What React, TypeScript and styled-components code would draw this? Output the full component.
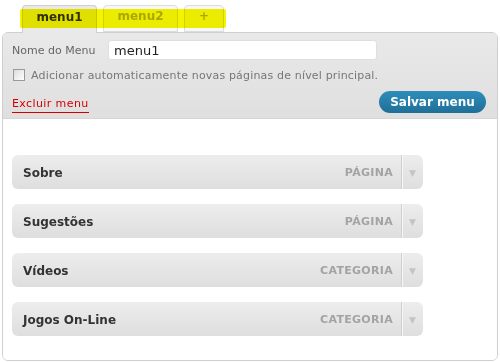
import styled, { createGlobalStyle } from "styled-components"

const GlobalStyle = createGlobalStyle`
  body {
    margin: 0;
    background: #ffffff;
    font-family: "DejaVu Sans", Verdana, sans-serif;
  }
`

const Page = styled.div`
  width: 500px;
  height: 362px;
  padding: 5px 0 0 2px;
  box-sizing: border-box;
`

const TabBar = styled.div`
  position: relative;
  display: flex;
  gap: 6px;
  padding-left: 20px;
  height: 27px;
  align-items: flex-end;
`

const Tab = styled.div<{ $active?: boolean; $w: number }>`
  width: ${(p) => p.$w}px;
  height: ${(p) => (p.$active ? 28 : 27)}px;
  box-sizing: border-box;
  margin-bottom: ${(p) => (p.$active ? -1 : 0)}px;
  border: 1px solid ${(p) => (p.$active ? "#cfcfcf" : "#dcdcdc")};
  border-bottom: ${(p) => (p.$active ? "none" : "1px solid #dcdcdc")};
  border-radius: 4px 4px 0 0;
  background: ${(p) => (p.$active ? "#e9e9e9" : "#f7f7f7")};
  display: flex;
  align-items: center;
  justify-content: center;
  padding-bottom: ${(p) => (p.$active ? 6 : 5)}px;
  font-size: 12px;
  font-weight: bold;
  color: ${(p) => (p.$active ? "#333" : "#b0b0b0")};
  z-index: 1;
`

const Highlight = styled.div`
  position: absolute;
  left: 18px;
  top: 4px;
  width: 206px;
  height: 19px;
  background: #f4f400;
  mix-blend-mode: multiply;
  z-index: 2;
  border-radius: 2px;
`

const Panel = styled.div`
  width: 496px;
  height: 329px;
  box-sizing: border-box;
  border: 1px solid #cfcfcf;
  border-radius: 6px;
  overflow: hidden;
  display: flex;
  flex-direction: column;
`

const Header = styled.div`
  height: 86px;
  box-sizing: border-box;
  background: linear-gradient(#e9e9e9, #dfdfdf);
  border-bottom: 1px solid #d6d6d6;
  padding: 7px 11px 0 9px;
  display: flex;
  flex-direction: column;
`

const NameRow = styled.div`
  display: flex;
  align-items: center;
  height: 20px;
`

const Label = styled.span`
  font-size: 11px;
  color: #666;
  width: 96px;
`

const NameInput = styled.input`
  width: 269px;
  height: 20px;
  box-sizing: border-box;
  border: 1px solid #dfdfdf;
  border-radius: 3px;
  background: #fff;
  padding: 0 5px;
  font-family: "DejaVu Sans", Verdana, sans-serif;
  font-size: 13px;
  color: #222;
  outline: none;
`

const CheckRow = styled.label`
  display: flex;
  align-items: center;
  margin-top: 9px;
  height: 12px;
  font-size: 11px;
  letter-spacing: 0.17px;
  color: #777;
`

const Box = styled.span`
  width: 10px;
  height: 10px;
  margin: 0 6px 0 1px;
  border: 1px solid #999;
  background: linear-gradient(135deg, #dcdcdc, #ffffff);
`

const ActionRow = styled.div`
  display: flex;
  justify-content: space-between;
  align-items: center;
  margin-top: 9px;
`

const DeleteLink = styled.a`
  font-size: 11px;
  letter-spacing: 0.4px;
  color: #d40000;
  text-decoration: none;
  border-bottom: 1px solid #d40000;
  padding-bottom: 2px;
  margin-top: 7px;
`

const SaveButton = styled.button`
  width: 107px;
  height: 22px;
  border: none;
  border-radius: 11px;
  background: linear-gradient(#2e8dbb, #1f6f98);
  color: #fff;
  font-family: "DejaVu Sans", Verdana, sans-serif;
  font-size: 12px;
  font-weight: bold;
  padding: 0;
`

const List = styled.div`
  flex: 1;
  background: #fff;
  padding: 36px 0 0 9px;
  display: flex;
  flex-direction: column;
  gap: 15px;
`

const Item = styled.div`
  width: 411px;
  height: 34px;
  box-sizing: border-box;
  border-radius: 6px;
  background: linear-gradient(#ededed, #dedede);
  display: flex;
  align-items: center;
  padding-left: 11px;
`

const ItemTitle = styled.span`
  flex: 1;
  padding-top: 2px;
  font-size: 12px;
  font-weight: bold;
  color: #333;
`

const ItemType = styled.span`
  padding-top: 1px;
  font-size: 11px;
  font-weight: bold;
  color: #a3a3a3;
  letter-spacing: 0.3px;
  margin-right: 8px;
`

const Toggle = styled.span`
  width: 22px;
  height: 100%;
  border-left: 1px solid #d0d0d0;
  box-shadow: inset 1px 0 0 #f6f6f6;
  display: flex;
  align-items: center;
  justify-content: center;
  padding-top: 2px;
  box-sizing: border-box;
  color: #c4c4c4;
  font-size: 9px;
`

const items = [
  { title: "Sobre", type: "PÁGINA" },
  { title: "Sugestões", type: "PÁGINA" },
  { title: "Vídeos", type: "CATEGORIA" },
  { title: "Jogos On-Line", type: "CATEGORIA" },
]

export default function App() {
  return (
    <Page>
      <GlobalStyle />
      <TabBar>
        <Tab $active $w={75}>menu1</Tab>
        <Tab $w={75}>menu2</Tab>
        <Tab $w={40}>+</Tab>
        <Highlight />
      </TabBar>
      <Panel>
        <Header>
          <NameRow>
            <Label>Nome do Menu</Label>
            <NameInput defaultValue="menu1" />
          </NameRow>
          <CheckRow>
            <Box />
            Adicionar automaticamente novas páginas de nível principal.
          </CheckRow>
          <ActionRow>
            <DeleteLink>Excluir menu</DeleteLink>
            <SaveButton>Salvar menu</SaveButton>
          </ActionRow>
        </Header>
        <List>
          {items.map((item) => (
            <Item key={item.title}>
              <ItemTitle>{item.title}</ItemTitle>
              <ItemType>{item.type}</ItemType>
              <Toggle>▼</Toggle>
            </Item>
          ))}
        </List>
      </Panel>
    </Page>
  )
}
